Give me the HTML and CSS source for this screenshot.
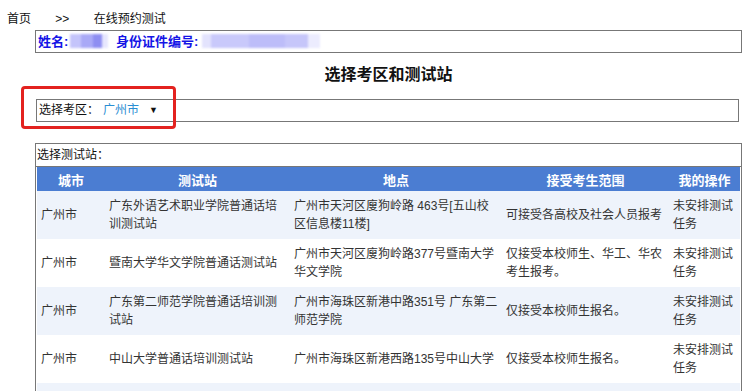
FILE: index.html
```html
<!DOCTYPE html>
<html lang="zh-CN">
<head>
    <meta charset="UTF-8">
    <title>在线预约测试</title>
    <link rel="stylesheet" href="styles.css">
</head>
<body>
    <div class="crumb">
        <span>首页</span>
        <span class="sep">&gt;&gt;</span>
        <span>在线预约测试</span>
    </div>

    <div class="main">
        <div class="info">
            姓名:<span class="mask mask-name"></span>
            身份证件编号:<span class="mask mask-id"></span>
        </div>

        <h3 class="title">选择考区和测试站</h3>

        <div class="area">
            选择考区：<span class="city">广州市</span><span class="arrow">▼</span>
            <span class="mark"></span>
        </div>

        <div class="stations">
            <div class="stations-label">选择测试站：</div>
            <table class="list">
                <colgroup>
                    <col style="width: 68px">
                    <col style="width: 185px">
                    <col style="width: 212px">
                    <col style="width: 167px">
                    <col style="width: 71px">
                </colgroup>
                <tr>
                    <th>城市</th>
                    <th>测试站</th>
                    <th>地点</th>
                    <th>接受考生范围</th>
                    <th>我的操作</th>
                </tr>
                <tr class="alt">
                    <td>广州市</td>
                    <td>广东外语艺术职业学院普通话培训测试站</td>
                    <td>广州市天河区廋狗岭路 463号[五山校区信息楼11楼]</td>
                    <td>可接受各高校及社会人员报考</td>
                    <td>未安排测试任务</td>
                </tr>
                <tr>
                    <td>广州市</td>
                    <td>暨南大学华文学院普通话测试站</td>
                    <td>广州市天河区廋狗岭路377号暨南大学华文学院</td>
                    <td>仅接受本校师生、华工、华农考生报考。</td>
                    <td>未安排测试任务</td>
                </tr>
                <tr class="alt">
                    <td>广州市</td>
                    <td>广东第二师范学院普通话培训测试站</td>
                    <td>广州市海珠区新港中路351号 广东第二师范学院</td>
                    <td>仅接受本校师生报名。</td>
                    <td>未安排测试任务</td>
                </tr>
                <tr>
                    <td>广州市</td>
                    <td>中山大学普通话培训测试站</td>
                    <td>广州市海珠区新港西路135号中山大学</td>
                    <td>仅接受本校师生报名。</td>
                    <td>未安排测试任务</td>
                </tr>
                <tr class="alt">
                    <td>广州市</td>
                    <td>华南理工大学普通话测试站</td>
                    <td>广州市天河区五山路381号华南理工大学</td>
                    <td>仅接受本校师生报名。</td>
                    <td>未安排测试任务</td>
                </tr>
            </table>
        </div>
    </div>
</body>
</html>
```

FILE: styles.css
```css
body {
    margin: 0;
    font-family: "Liberation Sans", "Noto Sans CJK SC", sans-serif;
    font-size: 12px;
    color: #111;
    background: #fff;
}
.crumb {
    padding: 10px 0 0 7px;
    height: 18px;
    line-height: 18px;
}
.crumb .sep {
    margin: 0 21px 0 21px;
}
.main {
    width: 707px;
    margin-left: 35px;
}
.info {
    margin-top: 2px;
    border: 1px solid #777;
    line-height: 21px;
    padding-left: 2px;
    color: #1414e6;
    font-size: 13px;
    font-weight: bold;
}
.mask {
    display: inline-block;
    height: 14px;
    vertical-align: -2px;
    filter: blur(1px);
}
.mask-name {
    width: 38px;
    margin: 0 4px 0 2px;
    background: linear-gradient(90deg, #c4c4fb 0 30%, #a9a9f7 30% 60%, #8e8ef2 60% 85%, #e6e6fd 85%);
}
.mask-id {
    width: 118px;
    margin-left: 4px;
    background: linear-gradient(90deg, #e3e3fd 0 8%, #c9c9fb 8% 40%, #bdbdf9 40% 70%, #c6c6fa 70% 90%, #ececfe 90%);
}
.title {
    margin: 12px 0 0 0;
    text-align: center;
    font-size: 16px;
    line-height: 20px;
    color: #111;
}
.area {
    position: relative;
    margin: 14px 3px 0 1px;
    border: 1px solid #777;
    line-height: 21px;
    padding-left: 2px;
}
.area .city {
    color: #2a8ed3;
    margin-left: 4px;
}
.area .arrow {
    font-size: 9px;
    margin-left: 10px;
    vertical-align: 1px;
}
.area .mark {
    position: absolute;
    top: -14px;
    left: -16px;
    width: 149px;
    height: 37px;
    border: 3px solid #e3221f;
    border-radius: 4px;
}
.stations {
    margin-top: 21px;
    border: 1px solid #777;
    border-bottom: none;
}
.stations-label {
    line-height: 22px;
    padding-left: 1px;
    border-bottom: 1px solid #777;
}
.list {
    width: 703px;
    margin: 0 1px;
    border-collapse: collapse;
    table-layout: fixed;
}
.list th {
    height: 24px;
    padding: 0;
    background-color: #4b7dd2;
    color: #fff;
    font-size: 13px;
    text-align: center;
}
.list td {
    height: 48px;
    padding: 0 2px 0 4px;
    line-height: 18px;
    color: #333;
    vertical-align: middle;
}
.list tr.alt td {
    background-color: #eef3fb;
}
```
